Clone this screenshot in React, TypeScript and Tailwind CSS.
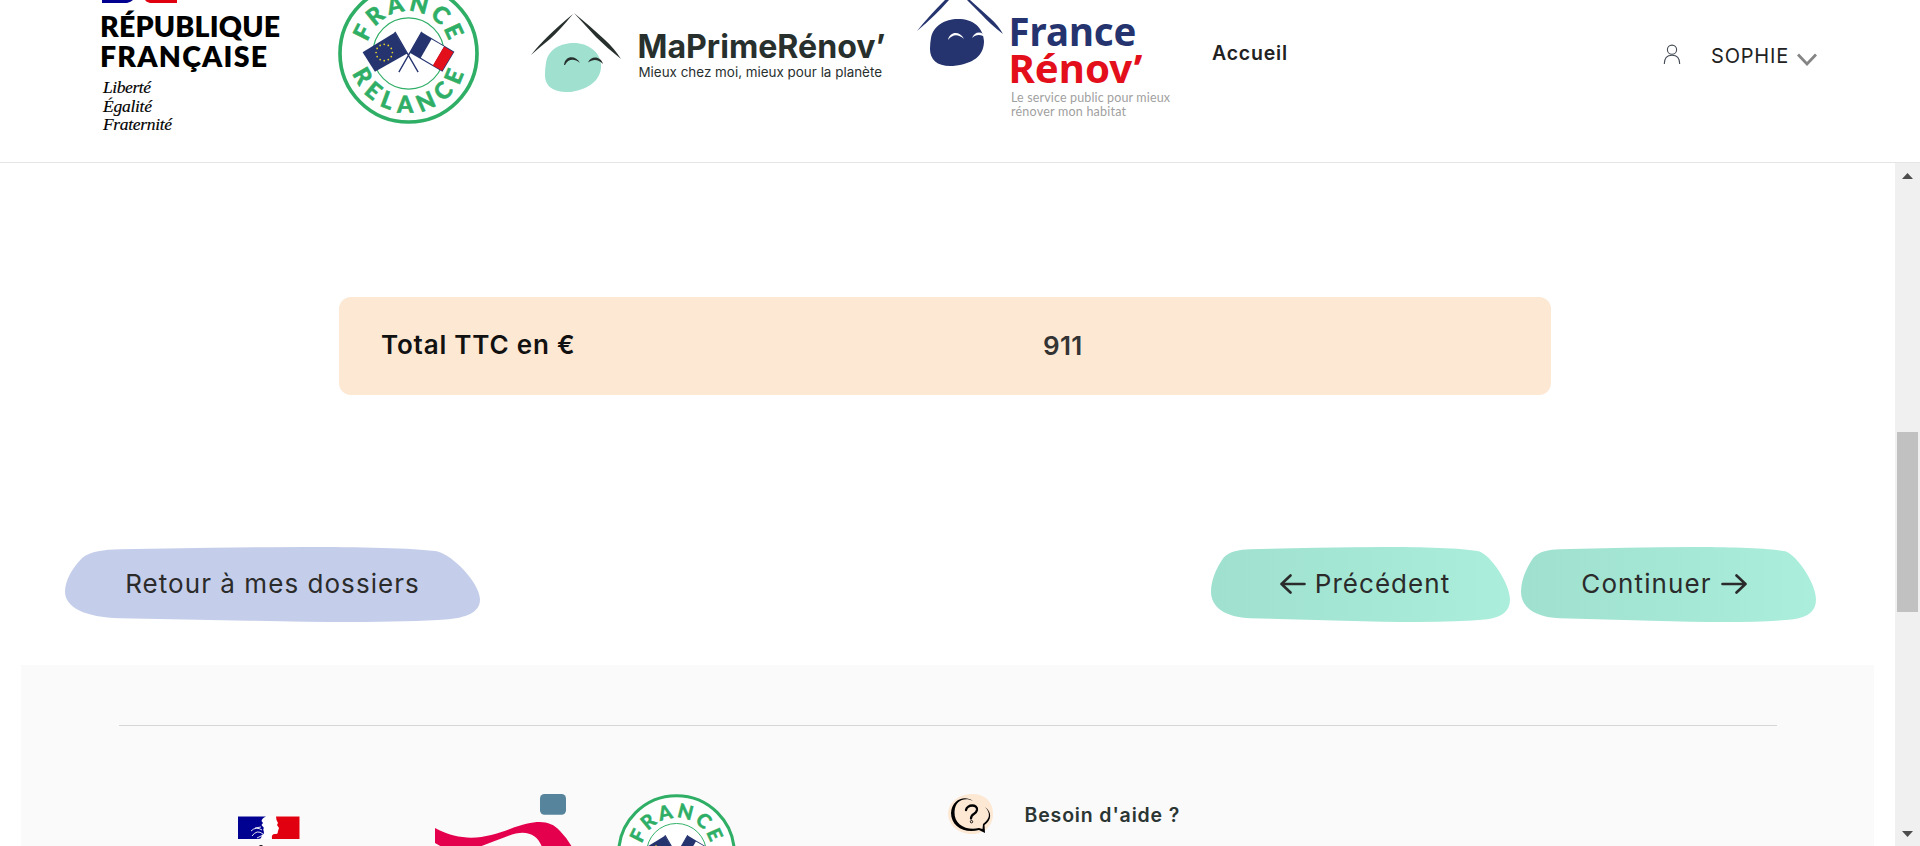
import { useId } from "react";

function RelanceBadge({ className }: { className: string }) {
  const id = useId();
  const stars = Array.from({ length: 12 }, (_, i) => {
    const a = (i * Math.PI) / 6;
    return { x: 163 + 24.5 * Math.cos(a), y: 157 + 24.5 * Math.sin(a) };
  });
  return (
    <svg className={className} viewBox="24 -52 424 424" aria-label="France Relance">
      <defs>
        <path id={`${id}t`} d="M120 212A127 127 0 1 1 352 212" />
        <path id={`${id}b`} d="M66 112A177 177 0 1 0 406 112" />
      </defs>
      <circle cx="236" cy="160" r="206" fill="#fff" stroke="#2fae66" strokeWidth="11" />
      <circle cx="236" cy="160" r="107" fill="none" stroke="#2fae66" strokeWidth="3.5" />
      <g fill="#2fae66" stroke="#2fae66" strokeWidth="1.500" fontFamily="Lato, sans-serif" fontWeight="900" fontSize="70" textAnchor="middle">
        <text letterSpacing="10">
          <textPath href={`#${id}t`} startOffset="50.500%">FRANCE</textPath>
        </text>
        <text letterSpacing="21">
          <textPath href={`#${id}b`} startOffset="51.500%">RELANCE</textPath>
        </text>
      </g>
      <path d="M195 95L265 216M276 95L207 216" stroke="#25346f" strokeWidth="4" />
      <path d="M98 156L195 97L232 160L135 215Z" fill="#25346f" />
      {stars.map((s, i) => (
        <circle key={i} cx={s.x} cy={s.y} r="2.6" fill="#e9d625" />
      ))}
      <path d="M276 96L374 155L338 215L240 158Z" fill="#25346f" />
      <path d="M305 117L343 139L311 195L273 173Z" fill="#fff" />
      <path d="M343 139L371 156L337 212L309 196Z" fill="#e30f1b" />
    </svg>
  );
}

function RepubliqueLogo() {
  return (
    <svg className="ml-[100px] h-[162px] w-[190px] shrink-0" viewBox="100 0 190 162">
      <path d="M102 0H133Q131 2 127 3H102Z" fill="#000091" />
      <path d="M145 0H177V3H150Q146 2 145 0Z" fill="#e1000f" />
      <g fontFamily="Lato, sans-serif" fontWeight="800" fontSize="28.5" fill="#000">
        <text x="100" y="37" textLength="180">RÉPUBLIQUE</text>
        <text x="100" y="66.5" textLength="167">FRANÇAISE</text>
      </g>
      <g fontFamily="'Liberation Serif', serif" fontStyle="italic" fontSize="17.5" fill="#000" stroke="#000" strokeWidth="0.15">
        <text x="103" y="93" textLength="48">Liberté</text>
        <text x="103" y="111.500" textLength="49">Égalité</text>
        <text x="103" y="130" textLength="69">Fraternité</text>
      </g>
    </svg>
  );
}

function MaPrimeLogo() {
  return (
    <svg className="ml-[51px] h-[162px] w-[360px] shrink-0" viewBox="530 0 360 162">
      <path d="M531 55Q545 37 573 14Q560 30 550 39Q540 47 531 55Z" fill="#28302e" />
      <path d="M574 13Q590 26 604 39Q614 48 621 59Q607 48 596 37Q584 24 574 13Z" fill="#28302e" />
      <path d="M546 63C548 49 561 43 574 43C588 43 600 52 601 64C602 79 590 89 571 92C556 93 545 88 545 75Q545 68 546 63Z" fill="#9fe0cf" />
      <path d="M564 65C565 55 576 55 580 63C574 58 568 59 565 65ZM588 62.500C591 55 601 56 603 64C598 59 593 59 588 62.500Z" fill="#28302e" />
      <g fontFamily="Inter, sans-serif" fill="#28302e">
        <text x="637.5" y="58" fontSize="32" fontWeight="700" textLength="248" lengthAdjust="spacingAndGlyphs">MaPrimeRénov’</text>
        <text x="638.5" y="77.3" fontSize="13" textLength="243.500" lengthAdjust="spacingAndGlyphs">Mieux chez moi, mieux pour la planète</text>
      </g>
    </svg>
  );
}

function FranceRenovLogo() {
  return (
    <svg className="ml-[25px] h-[162px] w-[260px] shrink-0" viewBox="915 0 260 162">
      <path d="M917 31Q928 17 945 0H949Q936 15 917 31Z" fill="#25346f" />
      <path d="M967 0H970L990 18Q998 25 1003 34Q990 24 981 14Z" fill="#25346f" />
      <path d="M931 38C933 26 945 19 958 19C973 19 983 27 984 41C984 56 973 64 953 66C938 67 930 60 930 49Q930 43 931 38Z" fill="#25346f" />
      <path d="M948 40C950 31 960 31 964 39C958 34 953 34 948 40ZM972 38C974 33 979 31 983 34V36C979 34 975 35 972 38Z" fill="#fff" />
      <g fontFamily="'Noto Sans', sans-serif" fontSize="39" fontWeight="700">
        <text x="1008.500" y="46" fill="#25346f" textLength="128" lengthAdjust="spacingAndGlyphs">France</text>
        <text x="1008.500" y="83" fill="#e30f1b" textLength="134" lengthAdjust="spacingAndGlyphs">Rénov’</text>
      </g>
      <g fontFamily="Lato, sans-serif" fontSize="12.500" fill="#9f9f9f" fontWeight="400">
        <text x="1011" y="101.500" textLength="159">Le service public pour mieux</text>
        <text x="1011" y="115.500" textLength="115">rénover mon habitat</text>
      </g>
    </svg>
  );
}

function BlobButton({ tone, className, children }: { tone: "blue" | "green"; className: string; children: React.ReactNode }) {
  const id = useId();
  return (
    <button className={`relative isolate flex h-[75px] items-center justify-center gap-[9px] pb-px text-[26px] leading-none text-[#2b2b2b] ${className}`}>
      <svg className="absolute inset-0 -z-10 h-full w-full" viewBox="0 0 1245 224" preserveAspectRatio="none">
        <linearGradient id={id} x1="0" y1="0" x2="1" y2="0">
          <stop offset="0" stopColor={tone === "blue" ? "#c4ceea" : "#9fe0cf"} />
          <stop offset="1" stopColor={tone === "blue" ? "#c4ceea" : "#abeedb"} />
        </linearGradient>
        <path
          fill={`url(#${id})`}
          d="M0 134C0 100 22 62 52 32C78 12 115 8 165 6.500L440 2Q600 0 720 0C880 0 1045 3 1115 13C1165 24 1245 110 1245 157C1245 190 1215 210 1150 216Q1030 224 860 224Q720 224 550 220L165 213C60 211 0 180 0 134Z"
        />
      </svg>
      {children}
    </button>
  );
}

function Arrow({ flip = false }: { flip?: boolean }) {
  return (
    <svg className={flip ? "h-5 w-[26px] rotate-180" : "h-5 w-[26px]"} viewBox="0 0 26 20" fill="none" stroke="#2b2b2b" strokeWidth="2.6" strokeLinecap="round" strokeLinejoin="round">
      <path d="M1.500 10H24.500M15.500 1.500L24.500 10L15.500 18.500" />
    </svg>
  );
}

export default function App() {
  return (
    <div className="flex h-[846px] w-[1920px] flex-col overflow-hidden bg-white font-['Inter','Liberation_Sans',sans-serif]">
      <header className="flex h-[163px] shrink-0 items-start overflow-hidden border-b border-[#e5e5e5]">
        <RepubliqueLogo />
        <RelanceBadge className="mt-[-17.300px] ml-[48px] h-[141px] w-[141px] shrink-0" />
        <MaPrimeLogo />
        <FranceRenovLogo />
        <nav className="ml-[37px] flex flex-1 items-start">
          <a className="mt-[40px] text-[19.500px] leading-[26px] font-semibold tracking-[0.8px] text-[#222]">Accueil</a>
          <div className="mr-[103px] ml-auto flex items-start">
            <svg className="mt-[44px] h-[21px] w-[18px]" viewBox="0 0 18 21" fill="none" stroke="#444b55" strokeWidth="1.100">
              <circle cx="9" cy="5.700" r="4.600" />
              <path d="M1.300 20C1.300 14.500 4 11.300 9 11.300S16.700 14.500 16.700 20" />
            </svg>
            <span className="mt-[43px] ml-[30px] text-[20px] leading-[26px] tracking-[0.8px] text-[#222]">SOPHIE</span>
            <svg className="mt-[53px] ml-[8px] h-[13px] w-[20px]" viewBox="0 0 20 13" fill="none" stroke="#858585" strokeWidth="2.800">
              <path d="M1 1.500L10 11L19 1.500" />
            </svg>
          </div>
        </nav>
      </header>

      <div className="flex min-h-0 flex-1">
        <main className="flex w-[1895px] flex-col">
          <section className="mt-[134px] ml-[339px] flex h-[98px] w-[1212px] shrink-0 items-center rounded-[12px] bg-[#fde8d4] pb-[4px] pl-[42px] text-[26px] font-semibold">
            <span className="w-[662px] tracking-[0.8px] text-[#111]">Total TTC en €</span>
            <span className="pt-[2px] tracking-[0.3px] text-[#333]">911</span>
          </section>

          <div className="mt-[152px] mr-[79px] ml-[65px] flex shrink-0 items-center">
            <BlobButton tone="blue" className="w-[415px] tracking-[1.05px]">
              <span>Retour à mes dossiers</span>
            </BlobButton>
            <BlobButton tone="green" className="ml-auto w-[299px] pl-[9px] tracking-[1.050px]">
              <Arrow flip />
              <span>Précédent</span>
            </BlobButton>
            <BlobButton tone="green" className="ml-[11px] w-[295px] pr-[9px] tracking-[1.1px]">
              <span>Continuer</span>
              <Arrow />
            </BlobButton>
          </div>

          <footer className="mt-[43px] ml-[21px] flex w-[1853px] flex-1 flex-col overflow-hidden bg-[#fafafa]">
            <div className="mt-[60px] ml-[98px] h-px w-[1658px] shrink-0 bg-[#d6d6d6]" />
            <div className="flex h-[120px] items-start pl-[217px]">
              <svg className="mt-[90px] h-[30px] w-[62px] shrink-0" viewBox="238 816 62 30">
                <path d="M238 816H300V839H238Z" fill="#fff" />
                <path d="M238 816.500H266C263 818 262 819 261.500 821L263 823L261.500 825L264 828C262 829 265 832 263.500 834C260 836 263 839 258 839H238Z" fill="#000091" />
                <path d="M276 816.500H299.500V839H272Q271 834 275 834C278 834.500 277.500 833 278 831L279 828L277 825L278 823L276.500 820Z" fill="#e1000f" />
                <path d="M251 831Q256 826 262 830M252 836Q257 829 263 834M255 828L261 827M257 838L263 835" fill="none" stroke="#fff" strokeWidth="0.900" />
                <path d="M259 846L260 845H263L262 846Z" fill="#222" />
              </svg>
              <svg className="mt-[67px] ml-[135px] h-[53px] w-[140px] shrink-0" viewBox="435 793 140 53">
                <rect x="540" y="794" width="26" height="20.700" rx="4.500" fill="#56849c" />
                <path d="M435 828C465 844 488 837 510 829C535 820 549 819 560 831Q567 838 572 847H542C537 834 526 829 508 836Q492 842 479 847H442L435 843Z" fill="#e5004d" />
              </svg>
              <RelanceBadge className="mt-[68px] ml-[42px] h-[119px] w-[119px] shrink-0" />
              <svg className="mt-[68px] ml-[211.500px] h-[41px] w-[46px] shrink-0" viewBox="948 794 46 41">
                <path d="M948 813C949 801 960 794 973 794C985 794 993 802 993 814C993 826 984 834 972 834C958 834 948 825 948 813Z" fill="#fde8d4" />
                <path d="M973 801C965 795 952 799 951 813C951 826 964 834 979 830L985 833L984.500 825C992 820 992 812 985 807C991 813 990 819 983 824L982.500 829L979 828C967 831 954 825 954.500 812C955 800 965 797 973 801Z" fill="#000" />
                <path d="M966 810C967 804 978 804 977 810C976 815 971 813 971 818.500" fill="none" stroke="#000" strokeWidth="2.300" strokeLinecap="round" />
                <circle cx="971.500" cy="821.700" r="1.200" fill="none" stroke="#000" strokeWidth="0.900" />
              </svg>
              <span className="mt-[76px] ml-[31px] text-[19.500px] leading-[26px] font-semibold tracking-[0.85px] text-[#2b3533]">Besoin d'aide ?</span>
            </div>
          </footer>
        </main>

        <aside className="flex w-[25px] shrink-0 flex-col items-center bg-[#f0f0f0]">
          <svg className="mt-[10px] h-[6px] w-[11px]" viewBox="0 0 11 6"><path d="M0 6L5.500 0L11 6Z" fill="#4d4d4d" /></svg>
          <div className="mt-[253px] h-[180px] w-[21px] bg-[#c1c1c1]" />
          <svg className="mt-auto mb-[9px] h-[6px] w-[11px]" viewBox="0 0 11 6"><path d="M0 0H11L5.500 6Z" fill="#4d4d4d" /></svg>
        </aside>
      </div>
    </div>
  );
}
